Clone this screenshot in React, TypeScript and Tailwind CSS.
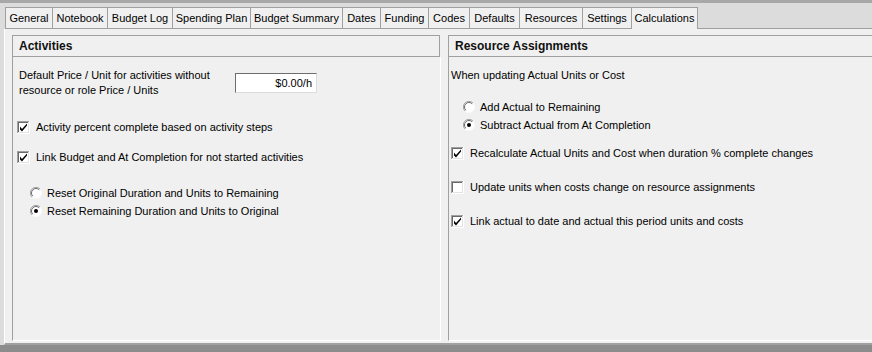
import React from "react";

const tabs: { name: string; w: number }[] = [
  { name: "General", w: 47 },
  { name: "Notebook", w: 55 },
  { name: "Budget Log", w: 65 },
  { name: "Spending Plan", w: 78 },
  { name: "Budget Summary", w: 92 },
  { name: "Dates", w: 38 },
  { name: "Funding", w: 48 },
  { name: "Codes", w: 41 },
  { name: "Defaults", w: 50 },
  { name: "Resources", w: 63 },
  { name: "Settings", w: 49 },
  { name: "Calculations", w: 67 },
];

function CheckBox({ checked }: { checked: boolean }) {
  return (
    <svg width="13" height="13" viewBox="0 0 13 13" className="shrink-0">
      <rect x="0" y="0" width="13" height="13" fill="#ffffff" />
      <rect x="0" y="0" width="12" height="1" fill="#a0a0a0" />
      <rect x="0" y="0" width="1" height="12" fill="#a0a0a0" />
      <rect x="1" y="1" width="10" height="1" fill="#696969" />
      <rect x="1" y="1" width="1" height="10" fill="#696969" />
      <rect x="1" y="11" width="11" height="1" fill="#e3e3e3" />
      <rect x="11" y="1" width="1" height="11" fill="#e3e3e3" />
      {checked && (
        <path
          d="M3 5.5 L3 8.5 L5 10.5 L10 4.5 L10 2.5 L5 8 Z"
          fill="#000000"
        />
      )}
    </svg>
  );
}

function Radio({ checked }: { checked: boolean }) {
  return (
    <svg width="12" height="12" viewBox="0 0 12 12" className="shrink-0">
      <circle cx="6" cy="6" r="5.5" fill="#ffffff" />
      <path d="M10 2 A5.5 5.5 0 0 0 2 10" stroke="#a0a0a0" strokeWidth="1" fill="none" />
      <path d="M9.2 2.8 A4.5 4.5 0 0 0 2.8 9.2" stroke="#696969" strokeWidth="1" fill="none" />
      <path d="M2 10 A5.5 5.5 0 0 0 10 2" stroke="#f8f8f8" strokeWidth="1" fill="none" />
      {checked && <circle cx="6" cy="6" r="2" fill="#000000" />}
    </svg>
  );
}

function CheckRow({ checked, label, className }: { checked: boolean; label: string; className: string }) {
  return (
    <div className={`flex items-center h-[15px] ${className}`}>
      <CheckBox checked={checked} />
      <span className="ml-[6px]">{label}</span>
    </div>
  );
}

function RadioRow({ checked, label }: { checked: boolean; label: string }) {
  return (
    <div className="flex items-center h-[18px]">
      <Radio checked={checked} />
      <span className="ml-[5px]">{label}</span>
    </div>
  );
}

function PanelHeader({ title, className }: { title: string; className?: string }) {
  return (
    <div
      className={`h-[22px] border border-[#a0a0a0] flex items-center pl-[6px] text-[12px] font-bold text-[#111] ${className ?? ""}`}
    >
      {title}
    </div>
  );
}

export default function App() {
  return (
    <div
      className="w-[872px] h-[352px] overflow-hidden bg-[#dcdcdc] flex flex-col text-[11px] text-black"
      style={{ fontFamily: '"Liberation Sans", Arial, sans-serif' }}
    >
      <div className="h-[3px] bg-[#a8a8a8]" />
      <div className="h-[4px]" />

      {/* Tabs */}
      <div className="flex h-[22px] pl-[5px]">
        {tabs.map((t, i) => {
          const active = t.name === "Calculations";
          return (
            <div
              key={t.name}
              style={{ width: t.w }}
              className={`h-[22px] shrink-0 flex items-center justify-center border-t border-l border-[#a0a0a0] bg-[#f0f0f0] ${
                i === tabs.length - 1 ? "border-r" : ""
              } ${active ? "" : "border-b"}`}
            >
              {t.name}
            </div>
          );
        })}
        <div className="flex-1 border-b border-[#a0a0a0]" />
      </div>

      {/* Tab content */}
      <div className="h-[316px] ml-[4px] border-l border-white bg-[#f0f0f0] border-b-2 border-b-[#a0a0a0] pt-[6px] pb-[2px] pl-[7px] flex gap-[7px] overflow-hidden">
        {/* Activities */}
        <div className="w-[429px] shrink-0 flex flex-col">
          <PanelHeader title="Activities" className="mr-[1px]" />
          <div className="h-[284px] border-l border-l-[#a0a0a0] border-r border-r-white border-b border-b-white pl-[6px]">
            <div className="flex items-center mt-[11px] h-[30px]">
              <div className="w-[216px] leading-[15px]">
                Default Price / Unit for activities without
                <br />
                resource or role Price / Units
              </div>
              <div className="w-[82px] h-[20px] bg-white border border-t-[#6e6e6e] border-l-[#6e6e6e] border-r-[#dcdcdc] border-b-[#dcdcdc] flex items-center justify-end pr-[4px]">
                $0.00/h
              </div>
            </div>
            <CheckRow checked label="Activity percent complete based on activity steps" className="mt-[22px] -ml-[2px]" />
            <CheckRow checked label="Link Budget and At Completion for not started activities" className="mt-[15px] -ml-[2px]" />
            <div className="mt-[19px] ml-[11px]">
              <RadioRow checked={false} label="Reset Original Duration and Units to Remaining" />
              <RadioRow checked label="Reset Remaining Duration and Units to Original" />
            </div>
          </div>
        </div>

        {/* Resource Assignments */}
        <div className="w-[430px] shrink-0 flex flex-col">
          <PanelHeader title="Resource Assignments" />
          <div className="h-[284px] border-l border-l-[#a0a0a0] border-b border-b-white pl-[2px]">
            <div className="mt-[11px] h-[15px] leading-[15px]">When updating Actual Units or Cost</div>
            <div className="mt-[15px] ml-[12px]">
              <RadioRow checked={false} label="Add Actual to Remaining" />
              <RadioRow checked label="Subtract Actual from At Completion" />
            </div>
            <CheckRow checked label="Recalculate Actual Units and Cost when duration % complete changes" className="mt-[12px]" />
            <CheckRow checked={false} label="Update units when costs change on resource assignments" className="mt-[19px]" />
            <CheckRow checked label="Link actual to date and actual this period units and costs" className="mt-[19px]" />
          </div>
        </div>
      </div>

      <div className="flex-1 bg-[#8c8c8c]" />
    </div>
  );
}
